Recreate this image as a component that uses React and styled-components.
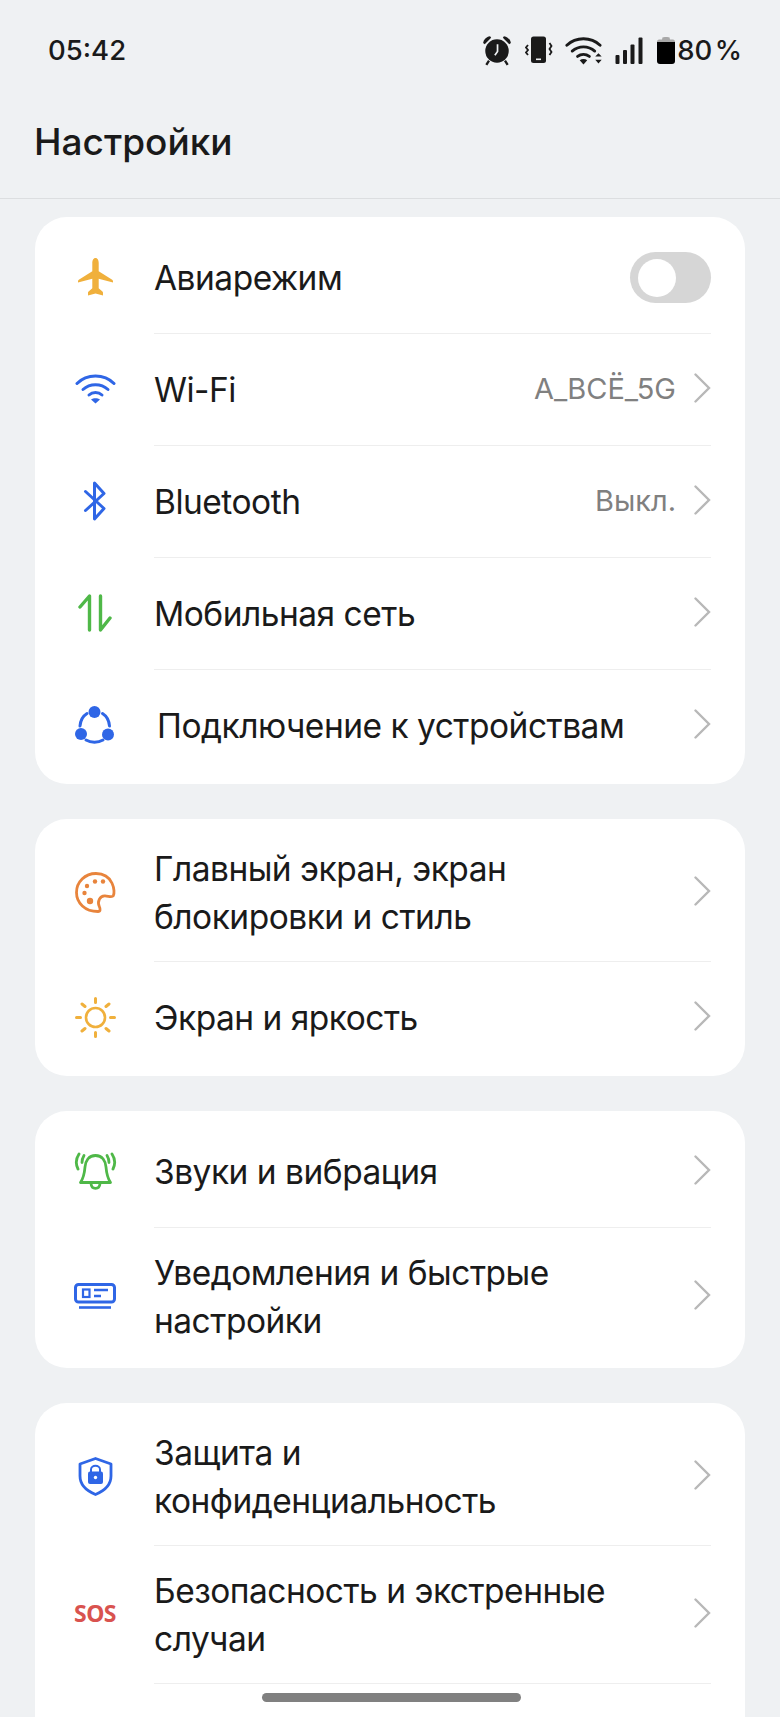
import React from "react";
import styled, { createGlobalStyle } from "styled-components";

const GlobalStyle = createGlobalStyle`
  html, body {
    margin: 0;
    padding: 0;
    background: #eff1f3;
  }
  body {
    font-family: Inter, "Noto Sans", sans-serif;
    color: #1a1a1a;
  }
`;

const BLUE = "#2f66e6";
const GREEN = "#4fb848";
const AMBER = "#f0b03c";
const ORANGE = "#e8843c";

function AlarmIcon() {
  return (
    <svg width="32" height="32" viewBox="0 0 30 30">
      <circle cx="15" cy="16" r="11" fill="#1a1a1a" />
      <path d="M2 8.500C2.500 5 5 2.500 8.500 2L9.500 3.500L3.500 9.500Z" fill="#1a1a1a" />
      <path d="M28 8.500C27.500 5 25 2.500 21.500 2L20.500 3.500L26.500 9.500Z" fill="#1a1a1a" />
      <path d="M7.500 25L5 29M22.500 25L25 29" stroke="#1a1a1a" strokeWidth="2.200" />
      <path d="M15.500 9.500V16.500L13 20" stroke="#eff1f3" strokeWidth="1.600" fill="none" />
    </svg>
  );
}

function VibrateIcon() {
  return (
    <svg width="28" height="28" viewBox="0 0 28 28">
      <rect x="6" y="0.500" width="15" height="26.500" rx="2.500" fill="#1a1a1a" />
      <rect x="11" y="22.500" width="5" height="1.600" fill="#eff1f3" />
      <path d="M3 9L1 11.500L3 14L1 16.500L3 19" stroke="#1a1a1a" strokeWidth="1.800" fill="none" />
      <path d="M24.500 7L26.500 10L24.500 13L26.500 16L24.500 19" stroke="#1a1a1a" strokeWidth="1.800" fill="none" />
    </svg>
  );
}

function StatusWifiIcon() {
  return (
    <svg width="38" height="30" viewBox="0 0 35 28">
      <g stroke="#1a1a1a" strokeWidth="2.700" fill="none" strokeLinecap="round">
        <path d="M1.500 9.500C10 1.500 24 1.500 32.500 9.500" />
        <path d="M6.500 15C12.500 9.800 21.500 9.800 27.500 15" />
        <path d="M11.500 20C14.800 17.500 19.200 17.500 22.500 20" />
      </g>
      <path d="M13.500 23.500C15.500 22 18.500 22 20.500 23.500L17 27.500Z" fill="#1a1a1a" />
      <path d="M28 20L31 17L34 20ZM28 23L31 26.500L34 23Z" fill="#1a1a1a" />
    </svg>
  );
}

function SignalIcon() {
  return (
    <svg width="28" height="27" viewBox="0 0 28 27">
      <g fill="#1a1a1a">
        <rect x="0.500" y="18" width="4" height="9" rx="1" />
        <rect x="8" y="13" width="4" height="14" rx="1" />
        <rect x="15.500" y="7.500" width="4" height="19.500" rx="1" />
        <rect x="23.500" y="0.500" width="4" height="26.500" rx="1" />
      </g>
    </svg>
  );
}

function BatteryIcon() {
  return (
    <svg width="20" height="28" viewBox="-2 0 20 28">
      <path d="M5.500 1.500C5.500 0.800 12.500 0.800 12.500 1.500L13 3.500H16C17 3.500 18 4.500 18 5.500V6H0V5.500C0 4.500 1 3.500 2 3.500H5Z" fill="#a8a8a8" />
      <path d="M0 6H18V25C18 27 17 28 15 28H3C1 28 0 27 0 25Z" fill="#000" />
    </svg>
  );
}

function PlaneIcon() {
  return (
    <svg width="35" height="38" viewBox="0 0 35 38">
      <path
        d="M17.500 0C15.300 0 14.300 2.500 14.300 5V13.300L0.800 21.800C0.200 22.200 0 22.700 0 23.300V24.500L14.300 20.800V30.300L10.600 33.500C10.200 33.900 10 34.300 10 34.800V37.500L17.500 35.500L25 37.500V34.800C25 34.300 24.800 33.900 24.400 33.500L20.700 30.300V20.800L35 24.500V23.300C35 22.700 34.800 22.200 34.200 21.800L20.700 13.300V5C20.700 2.500 19.700 0 17.500 0Z"
        fill={AMBER}
      />
    </svg>
  );
}

function WifiIcon() {
  return (
    <svg width="41" height="30" viewBox="0 0 41 30">
      <g stroke={BLUE} strokeWidth="3" fill="none" strokeLinecap="round">
        <path d="M2 9.500C12 -0.500 29 -0.500 39 9.500" />
        <path d="M8 15.500C15 9 26 9 33 15.500" />
        <path d="M14 21C17.500 17.800 23.500 17.800 27 21" />
      </g>
      <path d="M16 25.500C18.500 23.800 22.500 23.800 25 25.500L20.500 29.500Z" fill={BLUE} />
    </svg>
  );
}

function BluetoothIcon() {
  return (
    <svg width="24" height="40" viewBox="0 0 24 40">
      <path d="M2.500 10.500L21 27.500L11.500 38V2L21 12.500L2.500 29.500" stroke={BLUE} strokeWidth="3" fill="none" strokeLinejoin="round" strokeLinecap="round" />
    </svg>
  );
}

function ArrowsIcon() {
  return (
    <svg width="34" height="38" viewBox="0 0 34 38">
      <g stroke={GREEN} strokeWidth="3.400" fill="none" strokeLinecap="round" strokeLinejoin="round">
        <path d="M2 13L11.500 2V36" />
        <path d="M22.500 2V36L32 24" />
      </g>
    </svg>
  );
}

function ConnectIcon() {
  return (
    <svg width="40" height="38" viewBox="0 0 40 38">
      <g stroke={BLUE} strokeWidth="3" fill="none" strokeLinecap="round">
        <path d="M12 7.500C8 10 5.500 14 5 20" />
        <path d="M27.500 7.500C31.500 10 34 14 34.500 20" />
        <path d="M11 34C16 37 23 37 28 34" />
      </g>
      <g fill={BLUE}>
        <circle cx="19.500" cy="6" r="6" />
        <circle cx="6" cy="28" r="6" />
        <circle cx="33" cy="28.500" r="6" />
      </g>
    </svg>
  );
}

function PaletteIcon() {
  return (
    <svg width="41" height="41" viewBox="0 0 41 41">
      <path
        d="M21 1.500C10 1.500 1.500 10 1.500 20.500C1.500 31 10 39.500 23 39.500C25.500 39.500 25.500 37 24.300 34.500C22 29.500 25 23.500 30 23.800C33.500 24 37 25.800 38.300 23.800C40.500 20 38.500 1.500 21 1.500Z"
        stroke={ORANGE}
        strokeWidth="2.800"
        fill="none"
        strokeLinejoin="round"
      />
      <g fill={ORANGE}>
        <circle cx="20" cy="9.500" r="2.200" />
        <circle cx="28" cy="9.500" r="2.200" />
        <circle cx="12" cy="14" r="2.200" />
        <circle cx="9.500" cy="21" r="2.200" />
        <circle cx="15" cy="29" r="3.200" />
      </g>
    </svg>
  );
}

function SunIcon() {
  return (
    <svg width="41" height="41" viewBox="0 0 41 41">
      <circle cx="20.500" cy="20.500" r="9.500" stroke={AMBER} strokeWidth="2.600" fill="none" />
      <g stroke={AMBER} strokeWidth="3" strokeLinecap="round">
        <path d="M20.500 1.500V5.500M20.500 35.500V39.500M1.500 20.500H5.500M35.500 20.500H39.500" />
        <path d="M7 7L10 9.500M34 7L31 9.500M7 34L10 31.500M34 34L31 31.500" />
      </g>
    </svg>
  );
}

function BellIcon() {
  return (
    <svg width="45" height="38" viewBox="0 0 45 38">
      <g stroke={GREEN} strokeWidth="2.800" fill="none" strokeLinecap="round" strokeLinejoin="round">
        <path d="M22.500 3.500C15.500 3.500 12.500 9 12 15C11.500 21 10.500 26 7.500 30.500H37.500C34.500 26 33.500 21 33 15C32.500 9 29.500 3.500 22.500 3.500Z" />
        <path d="M18 31.500C18.500 38 26.500 38 27 31.500" />
        <path d="M6 2C3 6.500 2.500 12 5 17" />
        <path d="M11 3.500C9.500 6 9 8 9 10.500" />
        <path d="M39 2C42 6.500 42.500 12 40 17" />
        <path d="M34 3.500C35.500 6 36 8 36 10.500" />
      </g>
    </svg>
  );
}

function NoticeIcon() {
  return (
    <svg width="42" height="26" viewBox="0 0 42 26">
      <rect x="1.500" y="1.500" width="39" height="17.500" rx="3" stroke={BLUE} strokeWidth="3" fill="none" />
      <rect x="9" y="6.500" width="6.500" height="7.500" stroke={BLUE} strokeWidth="2.200" fill="none" />
      <path d="M20 7H34M20 13H27" stroke={BLUE} strokeWidth="2.400" />
      <path d="M5 24.500H37" stroke={BLUE} strokeWidth="2.600" />
    </svg>
  );
}

function ShieldIcon() {
  return (
    <svg width="35" height="39" viewBox="0 0 35 39">
      <path
        d="M17.500 1.500L33 7V19C33 28 26 34 17.500 37.500C9 34 2 28 2 19V7Z"
        stroke={BLUE}
        strokeWidth="2.800"
        fill="none"
        strokeLinejoin="round"
      />
      <path d="M13 15V12.500C13 7.500 22 7.500 22 12.500V15" stroke={BLUE} strokeWidth="2" fill="none" />
      <rect x="10" y="14.500" width="15" height="12.500" rx="2" fill={BLUE} />
      <circle cx="17.500" cy="20.500" r="1.700" fill="#fff" />
    </svg>
  );
}

function Chevron() {
  return (
    <ChevronSvg width="17" height="30" viewBox="0 0 17 30">
      <path d="M1.500 1.500L15 15L1.500 28.500" stroke="#b8b8b8" strokeWidth="2.400" fill="none" strokeLinecap="round" />
    </ChevronSvg>
  );
}

export default function App() {
  return (
    <Screen>
      <GlobalStyle />
      <StatusBar>
        <Clock>05:42</Clock>
        <StatusIcons>
          <AlarmIcon />
          <VibrateIcon />
          <StatusWifiIcon />
          <SignalIcon />
          <BatteryIcon />
          <BatteryText>80 %</BatteryText>
        </StatusIcons>
      </StatusBar>
      <TitleBar>
        <Title>Настройки</Title>
      </TitleBar>
      <List>
        {sections.map((rows, i) => (
          <Card key={i}>
            {rows.map((row, j) => (
              <Row key={j} $tall={row.tall}>
                <IconSlot>{row.icon}</IconSlot>
                <RowBody $first={j === 0}>
                  <Label $nudge={row.nudge}>{row.label}</Label>
                  {row.value && <Value>{row.value}</Value>}
                  {row.toggle ? (
                    <Toggle>
                      <Knob />
                    </Toggle>
                  ) : (
                    row.label && <Chevron />
                  )}
                </RowBody>
              </Row>
            ))}
          </Card>
        ))}
      </List>
      <HomeBar />
    </Screen>
  );
}

const Screen = styled.div`
  position: relative;
  width: 780px;
  height: 1717px;
  overflow: hidden;
  background: #eff1f3;
`;

const StatusBar = styled.div`
  display: flex;
  align-items: center;
  justify-content: space-between;
  height: 100px;
  padding: 0 38px 0 48px;
  box-sizing: border-box;
`;

const Clock = styled.span`
  font-size: 27.5px;
  font-weight: 500;
`;

const StatusIcons = styled.div`
  display: flex;
  align-items: center;
  gap: 12px;
`;

const BatteryText = styled.span`
  font-size: 27.5px;
  font-weight: 500;
  word-spacing: -5px;
  margin-left: -10px;
`;

const TitleBar = styled.div`
  display: flex;
  align-items: center;
  height: 99px;
  padding: 0 34px 16px;
  box-sizing: border-box;
  border-bottom: 1px solid #dcdee0;
`;

const Title = styled.h1`
  margin: 0;
  font-size: 37px;
  font-weight: 500;
`;

const List = styled.div`
  display: flex;
  flex-direction: column;
  gap: 35px;
  padding: 18px 35px 0;
`;

const Card = styled.section`
  background: #fff;
  border-radius: 32px;
  padding: 4px 0 3px;
`;

const Row = styled.div`
  display: flex;
  align-items: stretch;
  height: ${(p) => (p.$tall ? "138px" : "112px")};
`;

const IconSlot = styled.div`
  flex: 0 0 119px;
  display: flex;
  align-items: center;
  justify-content: center;
  padding-left: 1px;
  box-sizing: border-box;
`;

const RowBody = styled.div`
  flex: 1;
  min-width: 0;
  display: flex;
  align-items: center;
  margin-right: 34px;
  border-top: 1px solid ${(p) => (p.$first ? "transparent" : "#eeeeee")};
`;

const Label = styled.div`
  flex: 1;
  font-size: 33.5px;
  letter-spacing: -0.5px;
  line-height: 48px;
  white-space: pre-line;
  margin-left: ${(p) => (p.$nudge ? "3px" : "0")};
`;

const Value = styled.span`
  font-size: 29px;
  color: #808080;
  margin-right: 18px;
  margin-bottom: 2px;
`;

const ChevronSvg = styled.svg`
  flex: none;
  margin-bottom: 3px;
`;

const Toggle = styled.div`
  flex: none;
  display: flex;
  align-items: center;
  box-sizing: border-box;
  width: 81px;
  height: 51px;
  padding-left: 8px;
  border-radius: 26px;
  background: #d6d6d6;
`;

const Knob = styled.div`
  width: 38px;
  height: 38px;
  border-radius: 50%;
  background: #fff;
`;

const SosMark = styled.span`
  font-family: "Noto Sans", sans-serif;
  font-size: 23px;
  font-weight: 700;
  letter-spacing: -0.5px;
  color: #d9534f;
  margin-bottom: 3px;
`;

const HomeBar = styled.div`
  position: absolute;
  left: 262px;
  top: 1693px;
  width: 259px;
  height: 9px;
  border-radius: 5px;
  background: #808080;
`;

const sections = [
  [
    { icon: <PlaneIcon />, label: "Авиарежим", toggle: true },
    { icon: <WifiIcon />, label: "Wi-Fi", value: "A_ВСЁ_5G" },
    { icon: <BluetoothIcon />, label: "Bluetooth", value: "Выкл." },
    { icon: <ArrowsIcon />, label: "Мобильная сеть" },
    { icon: <ConnectIcon />, label: "Подключение к устройствам", nudge: true },
  ],
  [
    { icon: <PaletteIcon />, label: "Главный экран, экран\nблокировки и стиль", tall: true },
    { icon: <SunIcon />, label: "Экран и яркость" },
  ],
  [
    { icon: <BellIcon />, label: "Звуки и вибрация" },
    { icon: <NoticeIcon />, label: "Уведомления и быстрые\nнастройки", tall: true },
  ],
  [
    { icon: <ShieldIcon />, label: "Защита и\nконфиденциальность", tall: true },
    { icon: <SosMark>SOS</SosMark>, label: "Безопасность и экстренные\nслучаи", tall: true },
    { icon: null, label: "" },
  ],
];
